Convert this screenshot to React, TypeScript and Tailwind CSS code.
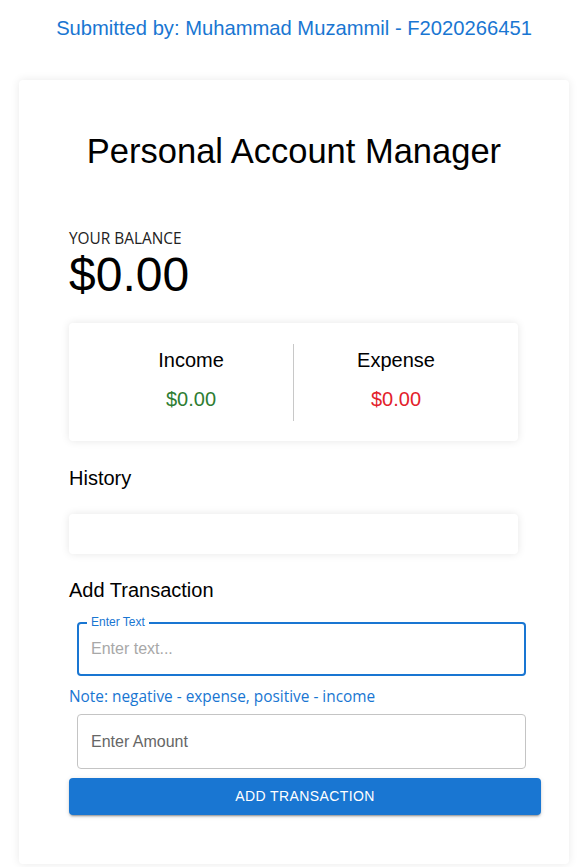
import React from "react";

export default function App() {
  return (
    <div className="min-h-screen bg-white font-['Liberation_Sans',Arial,sans-serif] text-black">
      <div className="ml-[19px] w-[550px] pb-[3px]">
        <p className="pt-[17px] text-center text-[20.2px] leading-[23px] text-[#1976d2]">
          Submitted by: Muhammad Muzammil - F2020266451
        </p>
        <div className="mt-[40px] rounded-[4px] bg-white px-[50px] pt-[51px] pb-[49px] shadow-[0_0_10px_rgba(0,0,0,0.09)]">
          <h1 className="text-center text-[34.5px] leading-[40px] font-normal">
            Personal Account Manager
          </h1>

          <div className="w-[449px]">
            <p className="mt-[58px] text-[15.4px] leading-[20px] text-[#222] font-['Open_Sans',sans-serif]">
              YOUR BALANCE
            </p>
            <p className="mt-[2px] text-[48px] leading-[48px]">$0.00</p>

            <div className="mt-[24px] flex h-[118px] rounded-[4px] bg-white px-[20px] pt-[21px] pb-[20px] shadow-[0_0_8px_rgba(0,0,0,0.1)]">
              <div className="flex flex-1 flex-col items-center pt-[4px]">
                <span className="text-[20px] leading-[24px]">Income</span>
                <span className="mt-[15px] text-[20px] leading-[24px] text-[#2e7d32]">$0.00</span>
              </div>
              <div className="w-px bg-[#c8c8c8]" />
              <div className="flex flex-1 flex-col items-center pt-[4px]">
                <span className="text-[20px] leading-[24px]">Expense</span>
                <span className="mt-[15px] text-[20px] leading-[24px] text-[#e3212b]">$0.00</span>
              </div>
            </div>

            <h3 className="mt-[25px] text-[20px] leading-[24px]">History</h3>
            <div className="mt-[24px] h-[40px] rounded-[4px] bg-white shadow-[0_0_8px_rgba(0,0,0,0.1)]" />

            <h3 className="mt-[24px] text-[20px] leading-[24px]">Add Transaction</h3>

            <div className="relative mt-[20px] ml-[8px] h-[54px] w-[449px] rounded-[4px] border-2 border-[#1976d2]">
              <span className="absolute -top-[9px] left-[8px] bg-white px-[4px] text-[12px] leading-[14px] text-[#1976d2]">
                Enter Text
              </span>
              <input
                className="h-full w-full bg-transparent pl-[12px] text-[16px] outline-none placeholder:text-[#a8a8a8]"
                placeholder="Enter text..."
              />
            </div>

            <p className="mt-[11px] text-[15.4px] leading-[20px] text-[#1976d2] font-['Open_Sans',sans-serif]">
              Note: negative - expense, positive - income
            </p>

            <div className="mt-[7px] ml-[8px] h-[55px] w-[449px] rounded-[4px] border border-[#c4c4c4]">
              <input
                className="h-full w-full bg-transparent pl-[13px] text-[16px] outline-none placeholder:text-[#666]"
                placeholder="Enter Amount"
              />
            </div>

            <button className="mt-[9px] flex h-[37px] w-[472px] items-center justify-center rounded-[4px] bg-[#1976d2] text-[14px] tracking-[0.4px] text-white shadow-[0_3px_1px_-2px_rgba(0,0,0,0.2),0_2px_2px_0_rgba(0,0,0,0.14),0_1px_5px_0_rgba(0,0,0,0.12)]">
              ADD TRANSACTION
            </button>
          </div>
        </div>
      </div>
    </div>
  );
}
